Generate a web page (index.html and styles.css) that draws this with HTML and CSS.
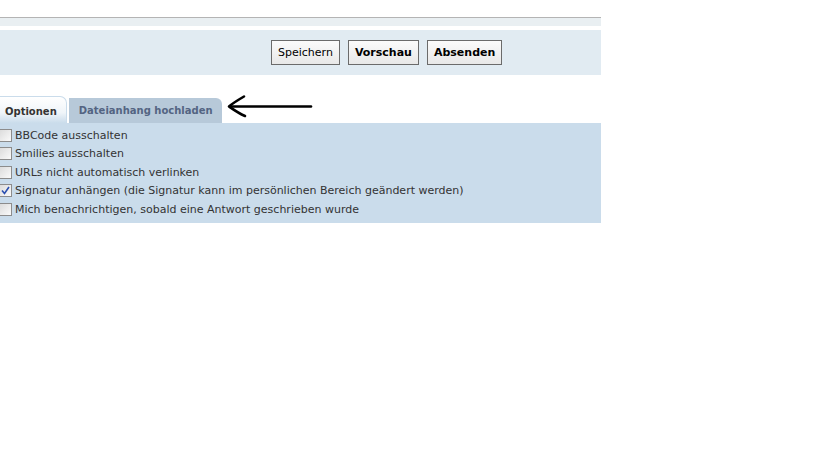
FILE: index.html
```html
<!DOCTYPE html>
<html lang="de">
<head>
<meta charset="utf-8">
<link rel="stylesheet" href="styles.css">
</head>
<body>
<div class="page">
  <div class="top-rule"></div>
  <div class="strip"></div>
  <div class="submit-panel">
    <button class="btn">Speichern</button>
    <button class="btn bold">Vorschau</button>
    <button class="btn bold">Absenden</button>
  </div>
  <div class="tabs">
    <div class="tab active">Optionen</div>
    <div class="tab">Dateianhang hochladen</div>
    <svg class="arrow" width="87" height="26" viewBox="0 0 87 26">
      <path d="M85 12.5 L4 12.5" fill="none" stroke="#000" stroke-width="2.6" stroke-linecap="round"/>
      <path d="M18 2.5 C12 6 7 9 3 12.5 C8 16 12 19 19 22" fill="none" stroke="#000" stroke-width="2.6" stroke-linecap="round" stroke-linejoin="round"/>
    </svg>
  </div>
  <div class="options">
    <label class="opt"><span class="cb"></span>BBCode ausschalten</label>
    <label class="opt"><span class="cb"></span>Smilies ausschalten</label>
    <label class="opt"><span class="cb"></span>URLs nicht automatisch verlinken</label>
    <label class="opt"><span class="cb checked"><svg width="9" height="9" viewBox="0 0 9 9"><path d="M1 4.5 L3.5 7.5 L8 1" fill="none" stroke="#2a4fb0" stroke-width="1.6"/></svg></span>Signatur anhängen (die Signatur kann im persönlichen Bereich geändert werden)</label>
    <label class="opt"><span class="cb"></span>Mich benachrichtigen, sobald eine Antwort geschrieben wurde</label>
  </div>
</div>
</body>
</html>
```
FILE: styles.css
```css
html, body {
  margin: 0;
  padding: 0;
  background: #fff;
}
body {
  font-family: Verdana, "DejaVu Sans", sans-serif;
  font-size: 11px;
  color: #333;
}
.page {
  width: 601px;
  padding-top: 17px;
}
.top-rule {
  height: 1px;
  background: #b4b4b4;
}
.strip {
  height: 8px;
  background: #e9eff2;
  margin-bottom: 4px;
}
.submit-panel {
  height: 45px;
  background: #e1ebf2;
  display: flex;
  align-items: center;
  gap: 8px;
  padding-left: 271px;
  box-sizing: border-box;
}
.btn {
  height: 25px;
  padding: 0 6px;
  font-family: inherit;
  font-size: 11px;
  color: #000;
  border: 1px solid #6b6b6b;
  background: linear-gradient(#fbfbfb, #e8e8e8);
  border-radius: 0;
  margin: 0;
}
.btn.bold {
  font-weight: bold;
}
.tabs {
  display: flex;
  align-items: flex-end;
  height: 48px;
  gap: 2px;
  box-sizing: border-box;
}
.tab {
  height: 25px;
  line-height: 25px;
  padding: 0 9px 0 10px;
  font-weight: bold;
  color: #536482;
  background: #b7c9d9;
  border-radius: 0 6px 0 0;
  font-size: 10px;
  box-sizing: border-box;
}
.tab.active {
  height: 27px;
  line-height: 29px;
  padding: 0 9px 0 5px;
  color: #333;
  background: linear-gradient(#fff, #f0f5f9 60%, #cadceb);
  border: 1px solid #cadceb;
  border-bottom: none;
  border-left: none;
  border-radius: 0 7px 0 0;
}
.arrow {
  align-self: center;
  margin-left: 2px;
  margin-top: 16px;
}
.options {
  background: #cadceb;
  height: 100px;
  padding-top: 3px;
  box-sizing: border-box;
}
.opt {
  display: flex;
  align-items: center;
  height: 18.5px;
  color: #333;
  white-space: nowrap;
}
.cb {
  width: 11px;
  height: 11px;
  border: 1px solid #8c8c8c;
  background: linear-gradient(135deg, #dcdcdc, #fafafa);
  margin-right: 3px;
  margin-left: -1px;
  display: inline-flex;
  align-items: center;
  justify-content: center;
}
```
